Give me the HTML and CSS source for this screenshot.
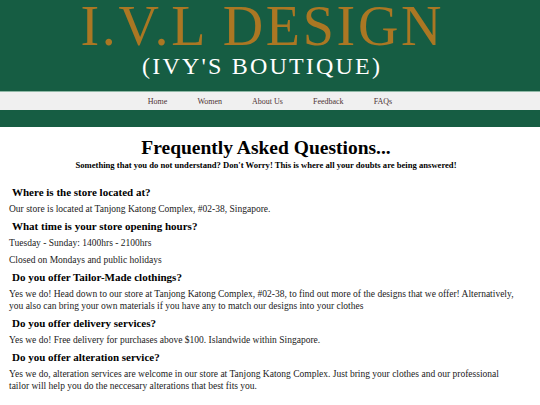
FILE: index.html
```html
<!DOCTYPE html>
<html>
<head>
<meta charset="utf-8">
<link rel="stylesheet" href="styles.css">
</head>
<body>
<header class="banner">
  <div class="logo">
    <div class="logo-main">I.V.L DESIGN</div>
    <div class="logo-sub">(IVY'S BOUTIQUE)</div>
  </div>
</header>
<nav class="nav">
  <a href="#">Home</a>
  <a href="#">Women</a>
  <a href="#">About Us</a>
  <a href="#">Feedback</a>
  <a href="#">FAQs</a>
</nav>
<div class="band"></div>
<main class="content">
  <div class="intro">
    <h1 class="title">Frequently Asked Questions...</h1>
    <p class="subtitle">Something that you do not understand? Don't Worry! This is where all your doubts are being answered!</p>
  </div>
  <section class="faq">
    <h3>Where is the store located at?</h3>
    <p>Our store is located at Tanjong Katong Complex, #02-38, Singapore.</p>
    <h3>What time is your store opening hours?</h3>
    <p>Tuesday - Sunday: 1400hrs - 2100hrs</p>
    <p>Closed on Mondays and public holidays</p>
    <h3>Do you offer Tailor-Made clothings?</h3>
    <p>Yes we do! Head down to our store at Tanjong Katong Complex, #02-38, to find out more of the designs that we offer! Alternatively, you also can bring your own materials if you have any to match our designs into your clothes</p>
    <h3>Do you offer delivery services?</h3>
    <p>Yes we do! Free delivery for purchases above $100. Islandwide within Singapore.</p>
    <h3>Do you offer alteration service?</h3>
    <p>Yes we do, alteration services are welcome in our store at Tanjong Katong Complex. Just bring your clothes and our professional tailor will help you do the neccesary alterations that best fits you.</p>
  </section>
</main>
</body>
</html>
```
FILE: styles.css
```css
html, body {
  margin: 0;
  padding: 0;
  background: #ffffff;
  font-family: "Liberation Serif", "Times New Roman", serif;
}
.banner {
  background: #165d43;
  height: 91px;
  display: flex;
  justify-content: center;
  padding-right: 18px;
}
.logo {
  display: flex;
  flex-direction: column;
  align-items: center;
}
.logo-main {
  color: #ab7723;
  font-size: 56px;
  line-height: 52px;
  letter-spacing: 2.7px;
  margin-right: -2.7px;
}
.logo-sub {
  color: #ffffff;
  font-size: 24px;
  line-height: 28px;
  letter-spacing: 2.2px;
  margin-right: -2.2px;
}
.nav {
  background: #f0f0f0;
  border-top: 1px solid #8fb8a6;
  height: 18px;
  display: flex;
  justify-content: center;
  align-items: center;
  gap: 30px;
}
.nav a {
  color: #4e3434;
  font-size: 8px;
  text-decoration: none;
}
.band {
  background: #165d43;
  height: 17px;
}
.content {
  padding: 0 24px 0 9px;
}
.intro {
  margin-left: -9px;
  margin-right: -16px;
}
.title {
  text-align: center;
  font-size: 19.5px;
  margin: 9px 0 0;
  line-height: 24px;
}
.subtitle {
  text-align: center;
  font-size: 8.6px;
  font-weight: bold;
  line-height: 10px;
  margin: 0 0 16px;
}
.faq h3 {
  font-size: 11px;
  margin: 5px 0 5px 3px;
  line-height: 12px;
}
.faq p {
  font-size: 9.5px;
  line-height: 12px;
  margin: 5px 0;
  color: #1a1a1a;
}
```
